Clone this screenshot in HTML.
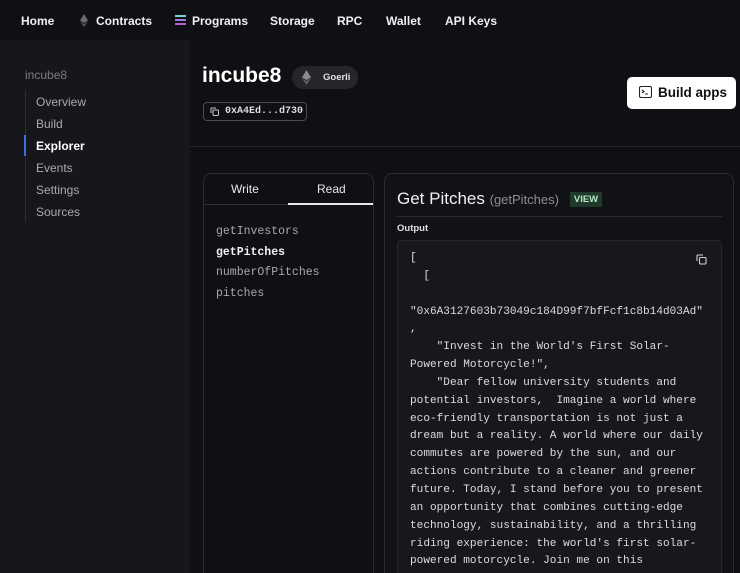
<!DOCTYPE html>
<html><head><style>
*{margin:0;padding:0;box-sizing:border-box}
html,body{width:740px;height:573px;overflow:hidden}
body{background:#0f1013;font-family:"Liberation Sans",sans-serif;color:#e8e8ea;position:relative}
.nav{position:absolute;left:0;top:0;width:740px;height:40px;background:#0f1013}
.nav span{position:absolute;top:14px;font-size:12px;font-weight:bold;color:#f0f0f2}
.side{position:absolute;left:0;top:40px;width:190px;height:533px;background:#16171b}
.side .t{position:absolute;left:25px;top:28px;font-size:12px;color:#7a7b82}
.side .line{position:absolute;left:25px;top:50px;width:1px;height:132px;background:#2c2d33}
.side .act{position:absolute;left:24px;top:95px;width:2px;height:21px;background:#3b6fe0}
.side .i{position:absolute;left:36px;font-size:12px;color:#a9aab0}
.mono{font-family:"Liberation Mono",monospace}
.abs{position:absolute}
</style></head><body>
<div class="nav">
<span style="left:21px">Home</span>
<svg class="abs" style="left:80px;top:14px" width="8" height="13" viewBox="0 0 8 13"><path d="M4 0L0 6.5 4 9 8 6.5Z" fill="#6b6c72"/><path d="M4 10L0 7.5 4 13 8 7.5Z" fill="#55565c"/></svg>
<span style="left:96px">Contracts</span>
<svg class="abs" style="left:175px;top:15px" width="11" height="10" viewBox="0 0 11 10"><rect x="0" y="0" width="11" height="2" fill="#7bd0d0"/><rect x="0" y="4" width="11" height="2" fill="#9a7ad8"/><rect x="0" y="8" width="11" height="2" fill="#b45fd6"/></svg>
<span style="left:192px">Programs</span>
<span style="left:270px">Storage</span>
<span style="left:337px">RPC</span>
<span style="left:386px">Wallet</span>
<span style="left:445px">API Keys</span>
</div>
<div class="side">
<div class="t">incube8</div>
<div class="line"></div><div class="act"></div>
<div class="i" style="top:55px">Overview</div>
<div class="i" style="top:77px">Build</div>
<div class="i" style="top:99px;color:#fff;font-weight:bold">Explorer</div>
<div class="i" style="top:121px">Events</div>
<div class="i" style="top:143px">Settings</div>
<div class="i" style="top:165px">Sources</div>
</div>
<div class="abs" style="left:202px;top:64px;font-size:21px;font-weight:bold;color:#fff">incube8</div>
<div class="abs" style="left:292px;top:66px;width:66px;height:23px;border-radius:12px;background:#25262b"></div>
<svg class="abs" style="left:302px;top:70px" width="9" height="15" viewBox="0 0 9 15"><path d="M4.5 0L0 7.5 4.5 10 9 7.5Z" fill="#8a8b90"/><path d="M4.5 11L0 8.5 4.5 15 9 8.5Z" fill="#5d5e63"/></svg>
<div class="abs" style="left:323px;top:72px;font-size:9.5px;font-weight:bold;color:#e0e0e2">Goerli</div>
<div class="abs" style="left:203px;top:102px;width:104px;height:19px;border:1px solid #4a4b50;border-radius:4px"></div>
<svg class="abs" style="left:210px;top:107px" width="9" height="9" viewBox="0 0 9 9" fill="none" stroke="#c8c8cc" stroke-width="1"><rect x="3" y="3" width="5.5" height="5.5" rx="1"/><path d="M1 6V1.5Q1 1 1.5 1H6"/></svg>
<div class="abs mono" style="left:225px;top:106px;font-size:10px;font-weight:bold;color:#dcdce0">0xA4Ed...d730</div>
<div class="abs" style="left:627px;top:77px;width:109px;height:32px;background:#fff;border-radius:5px"></div>
<svg class="abs" style="left:639px;top:86px" width="13" height="12" viewBox="0 0 13 12" fill="none" stroke="#222" stroke-width="1.1"><rect x="0.5" y="0.5" width="12" height="11" rx="1.5"/><path d="M3 4l2 1.5L3 7M6 8h3"/></svg>
<div class="abs" style="left:658px;top:85px;font-size:13.5px;font-weight:bold;color:#111">Build apps</div>
<div class="abs" style="left:190px;top:146px;width:550px;height:1px;background:#26272c"></div>
<div class="abs" style="left:203px;top:173px;width:171px;height:410px;border:1px solid #2a2b30;border-radius:8px;background:#0f1013"></div>
<div class="abs" style="left:231px;top:182px;font-size:12px;color:#e8e8ea">Write</div>
<div class="abs" style="left:317px;top:182px;font-size:12px;color:#e8e8ea">Read</div>
<div class="abs" style="left:204px;top:204px;width:169px;height:1px;background:#2f3035"></div>
<div class="abs" style="left:288px;top:203px;width:85px;height:2px;background:#e8e8ea"></div>
<div class="abs mono" style="left:216px;top:222px;font-size:11.5px;line-height:20.7px;color:#a8a9ae">getInvestors<br><span style="color:#f2f2f4;font-weight:bold">getPitches</span><br>numberOfPitches<br>pitches</div>
<div class="abs" style="left:384px;top:173px;width:350px;height:410px;border:1px solid #2a2b30;border-radius:8px;background:#111216"></div>
<div class="abs" style="left:397px;top:189px;font-size:17px;color:#f0f0f2">Get Pitches <span style="font-size:13px;color:#8d8e94">(getPitches)</span></div>
<div class="abs" style="left:570px;top:192px;width:32px;height:15px;background:#1f3a2a;color:#b8e6c4;font-size:9.5px;font-weight:bold;text-align:center;line-height:15px">VIEW</div>
<div class="abs" style="left:397px;top:216px;width:325px;height:1px;background:#2a2b30"></div>
<div class="abs" style="left:397px;top:223px;font-size:9.5px;font-weight:bold;color:#e0e0e2">Output</div>
<div class="abs" style="left:397px;top:240px;width:325px;height:340px;border:1px solid #26272c;border-radius:5px;background:#17181c"></div>
<svg class="abs" style="left:696px;top:254px" width="11" height="11" viewBox="0 0 11 11" fill="none" stroke="#d0d0d4" stroke-width="1.1"><rect x="3.5" y="3.5" width="6.5" height="6.5" rx="1"/><path d="M1 7V1.7Q1 1 1.7 1H7"/></svg>
<pre class="abs mono" style="left:410px;top:250px;font-size:11.1px;line-height:17.85px;color:#dcdce0">[
  [

"0x6A3127603b73049c184D99f7bfFcf1c8b14d03Ad"
,
    "Invest in the World's First Solar-
Powered Motorcycle!",
    "Dear fellow university students and
potential investors,  Imagine a world where
eco-friendly transportation is not just a
dream but a reality. A world where our daily
commutes are powered by the sun, and our
actions contribute to a cleaner and greener
future. Today, I stand before you to present
an opportunity that combines cutting-edge
technology, sustainability, and a thrilling
riding experience: the world's first solar-
powered motorcycle. Join me on this</pre>
</body></html>
